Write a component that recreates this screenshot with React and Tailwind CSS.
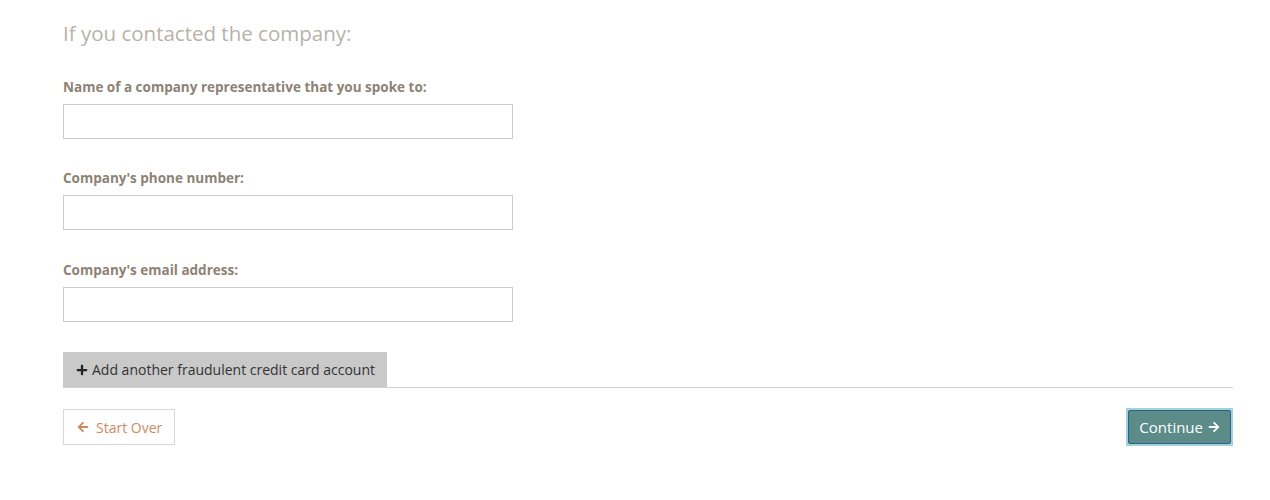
import { FaArrowLeft, FaArrowRight, FaPlus } from 'react-icons/fa';

const fields = [
  'Name of a company representative that you spoke to:',
  "Company's phone number:",
  "Company's email address:",
];

export default function App() {
  return (
    <div className="min-h-[500px] bg-white font-['Open_Sans',sans-serif]">
      <div className="ml-[63px] mr-[37px] pt-[19px]">
        <h2 className="text-[20.5px] leading-[28px] text-[#b7b2aa] font-normal">If you contacted the company:</h2>

        <div className="mt-[31px]">
          {fields.map((label, i) => (
            <div key={i} className={i === 1 ? 'mt-[30px]' : i === 2 ? 'mt-[31px]' : ''}>
              <label className="block text-[13.5px] leading-[18px] font-bold text-[#8c8275] mb-[8px]">{label}</label>
              <input type="text" className="block w-[450px] h-[35px] border border-[#cccccc] bg-white outline-none px-2" />
            </div>
          ))}
        </div>

        <div className="mt-[30px] border-b border-[#d0d0d0]">
          <button className="flex items-center gap-[4px] w-[324px] h-[35px] bg-[#c9c9c9] pl-[13px] text-[14px] text-[#333]">
            <FaPlus className="w-[12px] h-[12px] text-[#222]" />
            Add another fraudulent credit card account
          </button>
        </div>

        <div className="flex justify-between items-center mt-[20px]">
          <button className="flex items-center gap-[7px] w-[112px] h-[36px] border border-[#d8d8d8] bg-white pl-[13px] text-[14px] text-[#cd8a5f]">
            <FaArrowLeft className="w-[12px] h-[12px]" />
            Start Over
          </button>
          <div className="p-[2px] bg-[#9fd3d8]">
            <button className="flex items-center gap-[5px] h-[34px] px-[10px] bg-[#5c8b88] border border-[#2f5f8f] rounded-[2px] text-[15px] text-white">
              Continue
              <FaArrowRight className="w-[12px] h-[12px]" />
            </button>
          </div>
        </div>
      </div>
    </div>
  );
}
